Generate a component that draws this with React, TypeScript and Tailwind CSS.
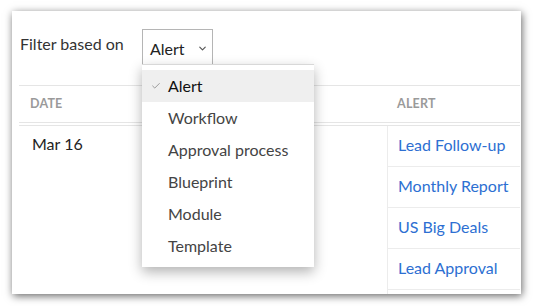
import { Check, ChevronDown } from "lucide-react";

const alerts = ["Lead Follow-up", "Monthly Report", "US Big Deals", "Lead Approval"];
const options = ["Alert", "Workflow", "Approval process", "Blueprint", "Module", "Template"];

const App = () => {
  return (
    <div className="w-[533px] h-[306px] bg-white pt-[11px] pl-[12px] font-['Lato',sans-serif]">
      <div className="relative w-[509px] h-[283px] bg-white shadow-[1px_2px_8px_rgba(0,0,0,0.6)] flex flex-col">
        <div className="h-[74px] flex items-start pt-[18px] pl-[8px]">
          <span className="w-[122px] h-[35px] flex items-center pb-[5px] text-[16px] text-[#333]">
            Filter based on
          </span>
          <div className="w-[71px] h-[35px] border border-b-0 border-[#b5b5b5] flex items-center pl-[7px] pt-[3px] text-[#222]">
            <span className="text-[16px]">Alert</span>
            <ChevronDown className="ml-[12px] w-[11px] h-[11px] text-[#555]" strokeWidth={2.5} />
          </div>
        </div>

        <div className="ml-[7px] mr-[1px] flex flex-col flex-1">
          <div className="h-[38px] border-t border-b border-[#e5e5e5] flex items-center text-[12.5px] font-bold text-[#9a9a9a] tracking-[0.2px]">
            <span className="w-[368px] pl-[11px]">DATE</span>
            <span className="pl-[10px]">ALERT</span>
          </div>
          <div className="mt-[2px] border-t border-[#e5e5e5] flex flex-1">
            <div className="w-[368px] pl-[13px] pt-[6px] text-[16px] text-[#222]">Mar 16</div>
            <div className="flex-1 border-l border-[#ececec]">
              {alerts.map((a) => (
                <div
                  key={a}
                  className="h-[41px] border-b border-[#ececec] flex items-center pl-[10px] pb-[3px] text-[16px] text-[#2d6fd2]"
                >
                  {a}
                </div>
              ))}
            </div>
          </div>
        </div>

        <div className="absolute left-[130px] top-[53px] w-[172px] bg-white border-t border-[#d8d8d8] py-[5px] shadow-[0_5px_12px_rgba(0,0,0,0.3)]">
          {options.map((o, i) => (
            <div
              key={o}
              className={`h-[32px] flex items-center text-[16px] ${
                i === 0 ? "bg-[#efefef] text-[#111]" : "text-[#444]"
              }`}
            >
              <span className="w-[26px] pl-[9px] flex items-center">
                {i === 0 && <Check className="w-[10px] h-[10px] text-[#666]" strokeWidth={1.5} />}
              </span>
              {o}
            </div>
          ))}
        </div>
      </div>
    </div>
  );
};

export default App;
